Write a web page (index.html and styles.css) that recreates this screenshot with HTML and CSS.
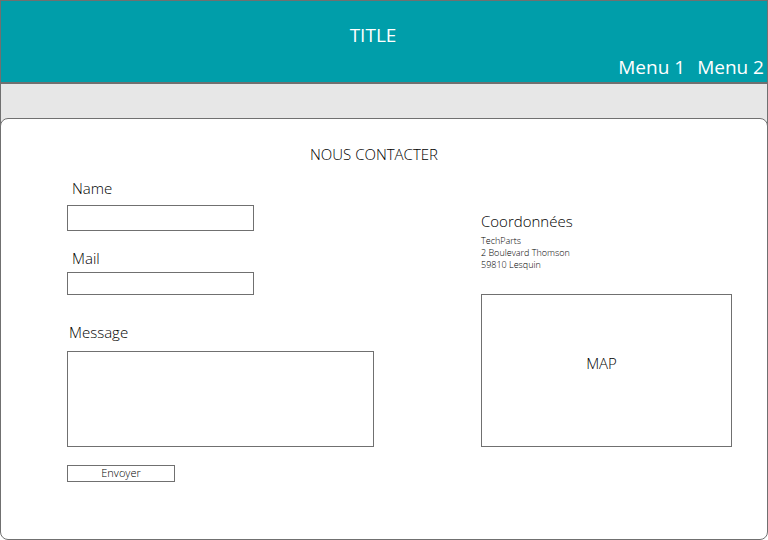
FILE: index.html
```html
<!DOCTYPE html>
<html lang="fr">
<head>
<meta charset="utf-8">
<meta name="viewport" content="width=device-width, initial-scale=1">
<title>Nous contacter</title>
<link rel="stylesheet" href="styles.css">
</head>
<body>
<header class="header">
  <h1 class="title">TITLE</h1>
  <nav class="menu">
    <a href="#">Menu 1</a>
    <a href="#">Menu 2</a>
  </nav>
</header>
<div class="band"></div>
<main class="card">
  <h2 class="heading">NOUS CONTACTER</h2>
  <div class="columns">
    <form class="form">
      <label class="label" for="name">Name</label>
      <input class="field field-name" id="name" type="text">
      <label class="label" for="mail">Mail</label>
      <input class="field field-mail" id="mail" type="email">
      <label class="label label-message" for="message">Message</label>
      <textarea class="field field-message" id="message"></textarea>
      <button class="send" type="submit">Envoyer</button>
    </form>
    <section class="contact">
      <h3 class="subheading">Coordonnées</h3>
      <address class="address">TechParts<br>2 Boulevard Thomson<br>59810 Lesquin</address>
      <div class="map">MAP</div>
    </section>
  </div>
</main>
</body>
</html>
```
FILE: styles.css
```css
* {
  box-sizing: border-box;
}

:root {
  --line: #707070;
}

body {
  display: flex;
  flex-direction: column;
  min-height: 100vh;
  margin: 0;
  background: #fff;
  color: #000;
  font-family: "Segoe UI", "Open Sans", "Noto Sans", sans-serif;
  font-size: 15px;
  font-weight: 350;
  line-height: 20px;
}

h1,
h2,
h3 {
  margin: 0;
  font-weight: inherit;
}

.header {
  display: flex;
  flex-direction: column;
  gap: 4px;
  padding: 20px 3px 1px;
  border: 1px solid var(--line);
  background: #009eaa;
  color: #fff;
  font-weight: 400;
  line-height: 28px;
}

.title {
  padding-right: 22px;
  font-size: 19px;
  text-align: center;
}

.menu {
  display: flex;
  justify-content: flex-end;
  gap: 12px;
  font-size: 19px;
}

.menu a {
  color: inherit;
  text-decoration: none;
}

.band {
  height: 43px;
  border: 1px solid var(--line);
  border-bottom: 0;
  background: #e7e7e7;
}

.card {
  flex: 1;
  margin-top: -8px;
  padding: 25px 35px 56px 66px;
  border: 1px solid var(--line);
  border-radius: 8px;
  background: #fff;
}

.heading {
  padding-right: 20px;
  margin-left: -31px;
  font-size: 15px;
  text-align: center;
}

.columns {
  display: grid;
  grid-template-columns: 307fr 251fr;
  column-gap: 107px;
  margin-top: 14px;
}

.form {
  display: flex;
  flex-direction: column;
  align-items: flex-start;
}

.label {
  padding-left: 5px;
}

.label-message {
  padding-left: 2px;
}

.field {
  padding: 2px 6px;
  border: 1px solid var(--line);
  border-radius: 0;
  background: #fff;
  font: inherit;
}

.field-name {
  width: 61%;
  height: 26px;
  margin: 7px 0 17px;
}

.field-mail {
  width: 61%;
  height: 23px;
  margin: 4px 0 27px;
}

.field-message {
  width: 100%;
  height: 96px;
  margin: 9px 0 18px;
  resize: none;
}

.send {
  width: 108px;
  padding: 0 0 2px;
  border: 1px solid var(--line);
  background: #fff;
  color: inherit;
  font: inherit;
  font-size: 11px;
  line-height: 13px;
}

.contact {
  display: flex;
  flex-direction: column;
  padding-top: 33px;
}

.subheading {
  font-size: 15px;
}

.address {
  margin: 4px 0 23px;
  font-size: 9px;
  font-style: normal;
  line-height: 12px;
}

.map {
  display: flex;
  align-items: center;
  justify-content: center;
  height: 153px;
  padding: 0 10px 16px 0;
  border: 1px solid var(--line);
}
```
